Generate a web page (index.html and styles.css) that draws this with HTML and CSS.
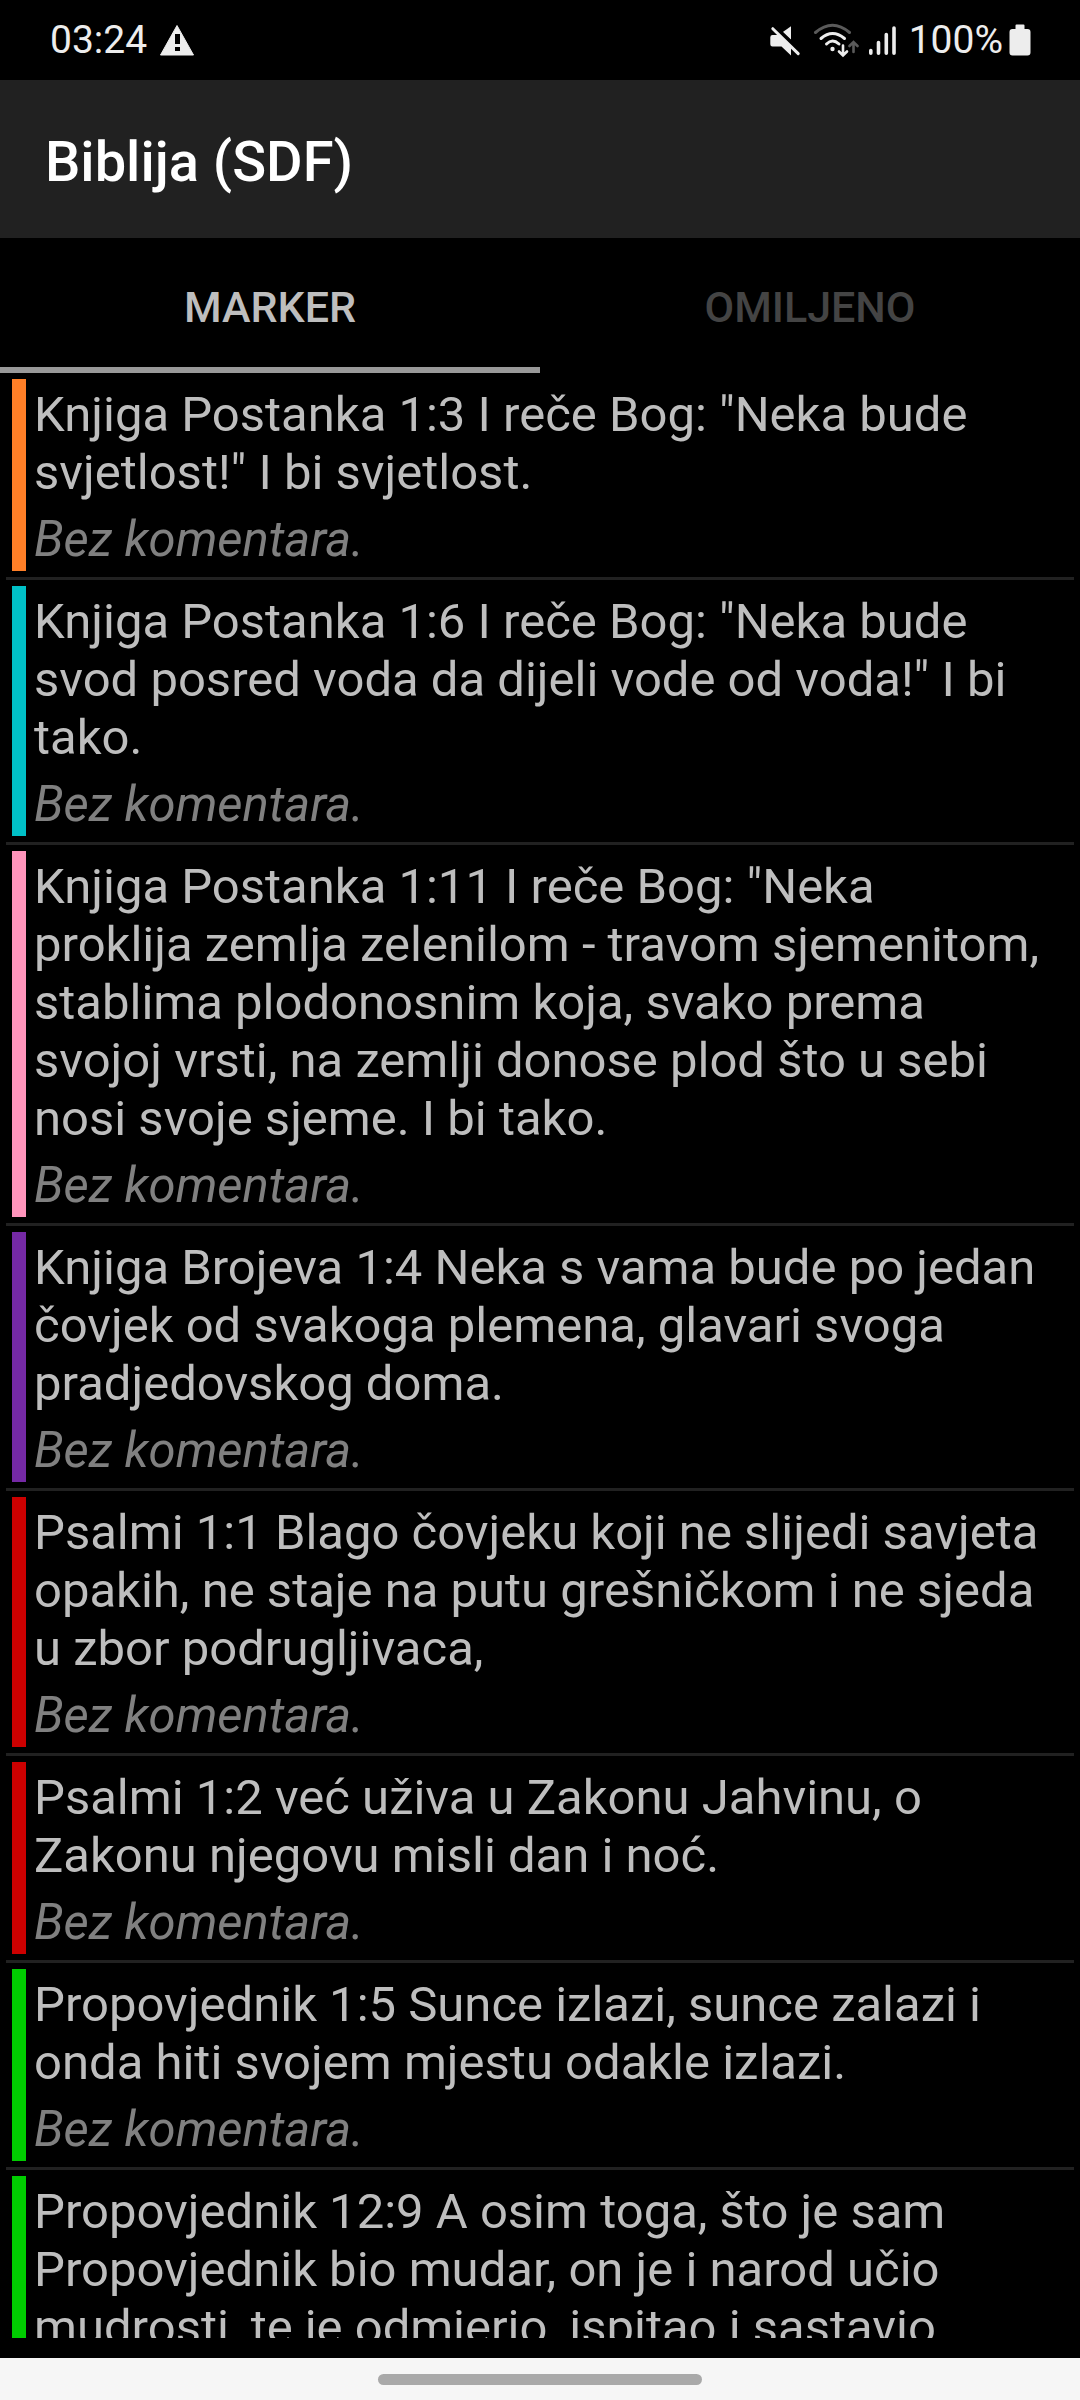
FILE: index.html
```html
<!DOCTYPE html>
<html lang="hr">
<head>
<meta charset="utf-8">
<meta name="viewport" content="width=device-width, initial-scale=1">
<title>Biblija (SDF)</title>
<link rel="stylesheet" href="styles.css">
</head>
<body>
<div class="screen">
  <div class="status">
    <div class="status-group status-left">
      <span>03:24</span>
      <svg class="icon" width="36" height="34" viewBox="0 0 36 34" aria-hidden="true">
        <path d="M18 2.500 34.500 32H1.500Z" fill="currentColor" stroke="currentColor" stroke-linejoin="round"/>
        <path d="M16 11h5v10h-5zM16 24h5v4h-5z" fill="#000"/>
      </svg>
    </div>
    <div class="status-group status-right">
      <svg class="icon icon-mute" width="32" height="34" viewBox="0 0 32 34" aria-hidden="true">
        <path d="M3.500 12H9l13 11.500V32.500L12.500 23.500H3.500Q1.300 23.500 1.300 21.300V14.200Q1.300 12 3.500 12Z" fill="currentColor"/>
        <path d="M22 3.200V17L13.500 9.300Z" fill="currentColor"/>
        <path d="M5.800 3.200 31.800 28.200" stroke="#000" stroke-width="3"/>
        <path d="M3.800 5.700 29.200 30.600" stroke="currentColor" stroke-width="3" stroke-linecap="round"/>
      </svg>
      <svg class="icon icon-wifi" width="46" height="36" viewBox="0 0 46 36" fill="none" stroke-linecap="round" stroke-width="3" aria-hidden="true">
        <path d="M2.500 10.500Q19.500-4 36.500 10.500" stroke="#5a5a5a"/>
        <path d="M8 16.500Q19.500 6.500 31.500 16.500M13.500 22Q19.500 16 26 22" stroke="currentColor"/>
        <circle cx="19.500" cy="27" r="2.200" fill="currentColor"/>
        <path d="M30 23.500V33M26 29.500 30 33.500 34 29.500" stroke="currentColor" stroke-width="2.600"/>
        <path d="M40.500 30V20.500M36.500 24 40.500 20 44.500 24" stroke="#5a5a5a" stroke-width="2.600"/>
      </svg>
      <svg class="icon icon-signal" width="30" height="34" viewBox="0 0 30 34" stroke="currentColor" stroke-width="3.600" stroke-linecap="round" aria-hidden="true">
        <path d="M3.800 27.500V30.200M11.500 19.500V30.200M19.300 11.500V30.200M27 5V30.200"/>
      </svg>
      <span>100%</span>
      <svg class="icon icon-battery" width="22" height="34" viewBox="0 0 22 34" fill="currentColor" aria-hidden="true">
        <path d="M6.500 2.500Q6.500 1.500 7.500 1.500H14.500Q15.500 1.500 15.500 2.500V6H18.500Q21.500 6 21.500 9V29.500Q21.500 32.500 18.500 32.500H3.500Q.500 32.500 .500 29.500V9Q.500 6 3.500 6H6.500Z"/>
      </svg>
    </div>
  </div>

  <header class="appbar"><h1 class="title">Biblija (SDF)</h1></header>

  <div class="tabs" role="tablist">
    <button class="tab tab-active" type="button" role="tab" aria-selected="true" aria-controls="marker-list">MARKER</button>
    <button class="tab" type="button" role="tab" aria-selected="false">OMILJENO</button>
  </div>

  <main class="content">
    <ul class="list" id="marker-list">
      <li class="item orange"><p class="verse">Knjiga Postanka 1:3 I reče Bog: "Neka bude svjetlost!" I bi svjetlost.</p><p class="comment">Bez komentara.</p></li>
      <li class="item teal"><p class="verse">Knjiga Postanka 1:6 I reče Bog: "Neka bude svod posred voda da dijeli vode od voda!" I bi tako.</p><p class="comment">Bez komentara.</p></li>
      <li class="item pink"><p class="verse">Knjiga Postanka 1:11 I reče Bog: "Neka proklija zemlja zelenilom - travom sjemenitom, stablima plodonosnim koja, svako prema svojoj vrsti, na zemlji donose plod što u sebi nosi svoje sjeme. I bi tako.</p><p class="comment">Bez komentara.</p></li>
      <li class="item purple"><p class="verse">Knjiga Brojeva 1:4 Neka s vama bude po jedan čovjek od svakoga plemena, glavari svoga pradjedovskog doma.</p><p class="comment">Bez komentara.</p></li>
      <li class="item red"><p class="verse">Psalmi 1:1 Blago čovjeku koji ne slijedi savjeta opakih, ne staje na putu grešničkom i ne sjeda u zbor podrugljivaca,</p><p class="comment">Bez komentara.</p></li>
      <li class="item red"><p class="verse">Psalmi 1:2 već uživa u Zakonu Jahvinu, o Zakonu njegovu misli dan i noć.</p><p class="comment">Bez komentara.</p></li>
      <li class="item green"><p class="verse">Propovjednik 1:5 Sunce izlazi, sunce zalazi i onda hiti svojem mjestu odakle izlazi.</p><p class="comment">Bez komentara.</p></li>
      <li class="item green"><p class="verse">Propovjednik 12:9 A osim toga, što je sam Propovjednik bio mudar, on je i narod učio mudrosti, te je odmjerio, ispitao i sastavio</p></li>
    </ul>
  </main>

  <div class="navbar"><div class="handle"></div></div>
</div>
</body>
</html>
```
FILE: styles.css
```css
* {
  box-sizing: border-box;
}

body {
  margin: 0;
  background: #000;
  font-family: Roboto, "Noto Sans", sans-serif;
}

.screen {
  display: flex;
  flex-direction: column;
  height: 100vh;
}

/* System status bar */
.status {
  flex: none;
  display: flex;
  justify-content: space-between;
  height: 80px;
  padding: 0 49px 0 50px;
  color: #ededed;
  font-size: 39px;
  line-height: 80px;
}

.status-group {
  display: flex;
  align-items: center;
}

.status-left {
  gap: 12px;
}

.icon {
  flex: none;
}

.icon-mute {
  margin-right: 12px;
}

.icon-wifi {
  margin-right: 8px;
}

.icon-signal {
  margin-right: 12px;
}

.icon-battery {
  margin-left: 6px;
}

/* App bar and tabs */
.appbar {
  flex: none;
  display: flex;
  align-items: center;
  height: 158px;
  padding: 5px 45px 0;
  background: #212121;
}

.title {
  margin: 0;
  color: #fff;
  font-size: 56px;
  font-weight: 500;
  line-height: 64px;
}

.tabs {
  flex: none;
  display: grid;
  grid-template-columns: 1fr 1fr;
  height: 135px;
}

.tab {
  padding: 8px 0 0;
  border: 0;
  border-bottom: 6px solid transparent;
  background: none;
  color: #444;
  font: 500 43px/48px Roboto, "Noto Sans", sans-serif;
}

.tab-active {
  border-bottom-color: #999;
  color: #bebebe;
}

/* Highlighted verses */
.content {
  flex: 1;
  min-height: 0;
  margin: 0 6px 20px;
  overflow: hidden;
}

.list {
  margin: 0;
  padding: 0;
  list-style: none;
}

.item {
  position: relative;
  padding: 13px 32px 8px 28px;
  border-bottom: 3px solid #212121;
}

.item::before {
  content: "";
  position: absolute;
  top: 6px;
  bottom: 6px;
  left: 6px;
  width: 14px;
  background: var(--marker);
}

.orange { --marker: #ff7f27; }
.teal { --marker: #00c0c7; }
.pink { --marker: #ff94bb; }
.purple { --marker: #7529a5; }
.red { --marker: #cc0000; }
.green { --marker: #00cc00; }

.verse,
.comment {
  margin: 0;
  font-size: 49px;
  line-height: 58px;
}

.verse {
  color: #bebebe;
}

.comment {
  margin-top: 9px;
  color: #808080;
  font-style: italic;
}

/* Gesture navigation */
.navbar {
  flex: none;
  display: flex;
  align-items: center;
  justify-content: center;
  height: 42px;
  background: #f6f6f6;
}

.handle {
  width: 30%;
  height: 11px;
  border-radius: 6px;
  background: #a9a9a9;
}
```
